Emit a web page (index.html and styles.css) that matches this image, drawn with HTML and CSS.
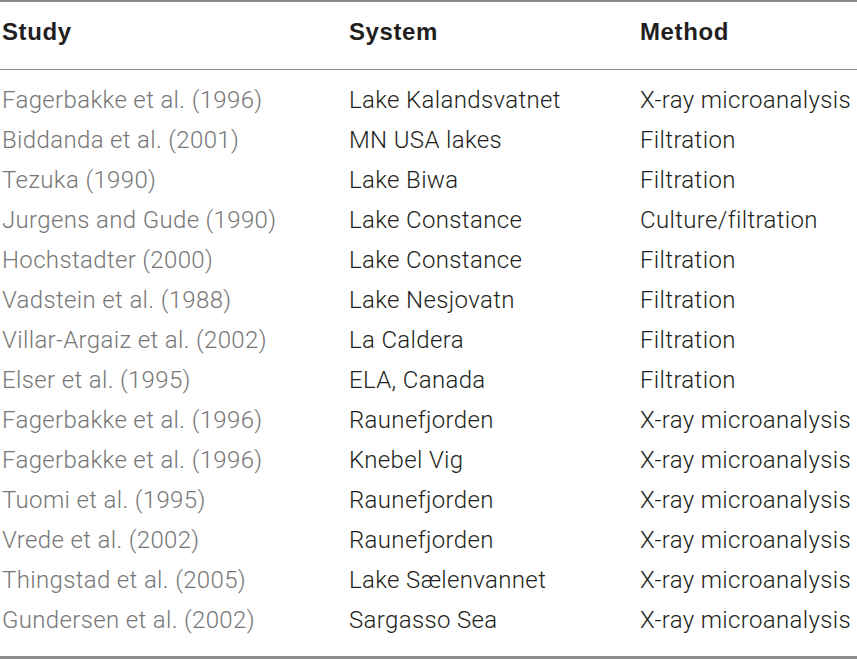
FILE: index.html
```html
<!DOCTYPE html>
<html lang="en">
<head>
    <meta charset="UTF-8">
    <title>Table</title>
    <link rel="stylesheet" href="styles.css">
</head>
<body>
    <div class="table">
        <div class="head">
            <div class="cell study">Study</div>
            <div class="cell">System</div>
            <div class="cell">Method</div>
        </div>
        <div class="rows">
            <div class="row"><div class="cell study">Fagerbakke et al. (1996)</div><div class="cell">Lake Kalandsvatnet</div><div class="cell">X-ray microanalysis</div></div>
            <div class="row"><div class="cell study">Biddanda et al. (2001)</div><div class="cell">MN USA lakes</div><div class="cell">Filtration</div></div>
            <div class="row"><div class="cell study">Tezuka (1990)</div><div class="cell">Lake Biwa</div><div class="cell">Filtration</div></div>
            <div class="row"><div class="cell study">Jurgens and Gude (1990)</div><div class="cell">Lake Constance</div><div class="cell">Culture/filtration</div></div>
            <div class="row"><div class="cell study">Hochstadter (2000)</div><div class="cell">Lake Constance</div><div class="cell">Filtration</div></div>
            <div class="row"><div class="cell study">Vadstein et al. (1988)</div><div class="cell">Lake Nesjovatn</div><div class="cell">Filtration</div></div>
            <div class="row"><div class="cell study">Villar-Argaiz et al. (2002)</div><div class="cell">La Caldera</div><div class="cell">Filtration</div></div>
            <div class="row"><div class="cell study">Elser et al. (1995)</div><div class="cell">ELA, Canada</div><div class="cell">Filtration</div></div>
            <div class="row"><div class="cell study">Fagerbakke et al. (1996)</div><div class="cell">Raunefjorden</div><div class="cell">X-ray microanalysis</div></div>
            <div class="row"><div class="cell study">Fagerbakke et al. (1996)</div><div class="cell">Knebel Vig</div><div class="cell">X-ray microanalysis</div></div>
            <div class="row"><div class="cell study">Tuomi et al. (1995)</div><div class="cell">Raunefjorden</div><div class="cell">X-ray microanalysis</div></div>
            <div class="row"><div class="cell study">Vrede et al. (2002)</div><div class="cell">Raunefjorden</div><div class="cell">X-ray microanalysis</div></div>
            <div class="row"><div class="cell study">Thingstad et al. (2005)</div><div class="cell">Lake Sælenvannet</div><div class="cell">X-ray microanalysis</div></div>
            <div class="row"><div class="cell study">Gundersen et al. (2002)</div><div class="cell">Sargasso Sea</div><div class="cell">X-ray microanalysis</div></div>
        </div>
    </div>
</body>
</html>
```

FILE: styles.css
```css
body {
    margin: 0;
    background: #fff;
    font-family: Roboto, "Liberation Sans", sans-serif;
    color: #231f20;
}

.table {
    width: 857px;
    border-top: 2px solid #8c8c8c;
    border-bottom: 3px solid #8c8c8c;
}

.head,
.row {
    display: grid;
    grid-template-columns: 347px 291px 1fr;
    padding-left: 2px;
}

.head {
    height: 68px;
    box-sizing: border-box;
    padding-bottom: 8px;
    align-items: center;
    font-family: "Liberation Sans", Arial, sans-serif;
    font-weight: 700;
    font-size: 24px;
    letter-spacing: 0.6px;
    border-bottom: 1px solid #8c8c8c;
}

.rows {
    padding: 10px 0 16px;
}

.row {
    height: 40px;
    align-items: center;
    font-weight: 300;
    font-size: 24px;
    letter-spacing: 0.35px;
}

.row .study {
    color: #777;
}
```
